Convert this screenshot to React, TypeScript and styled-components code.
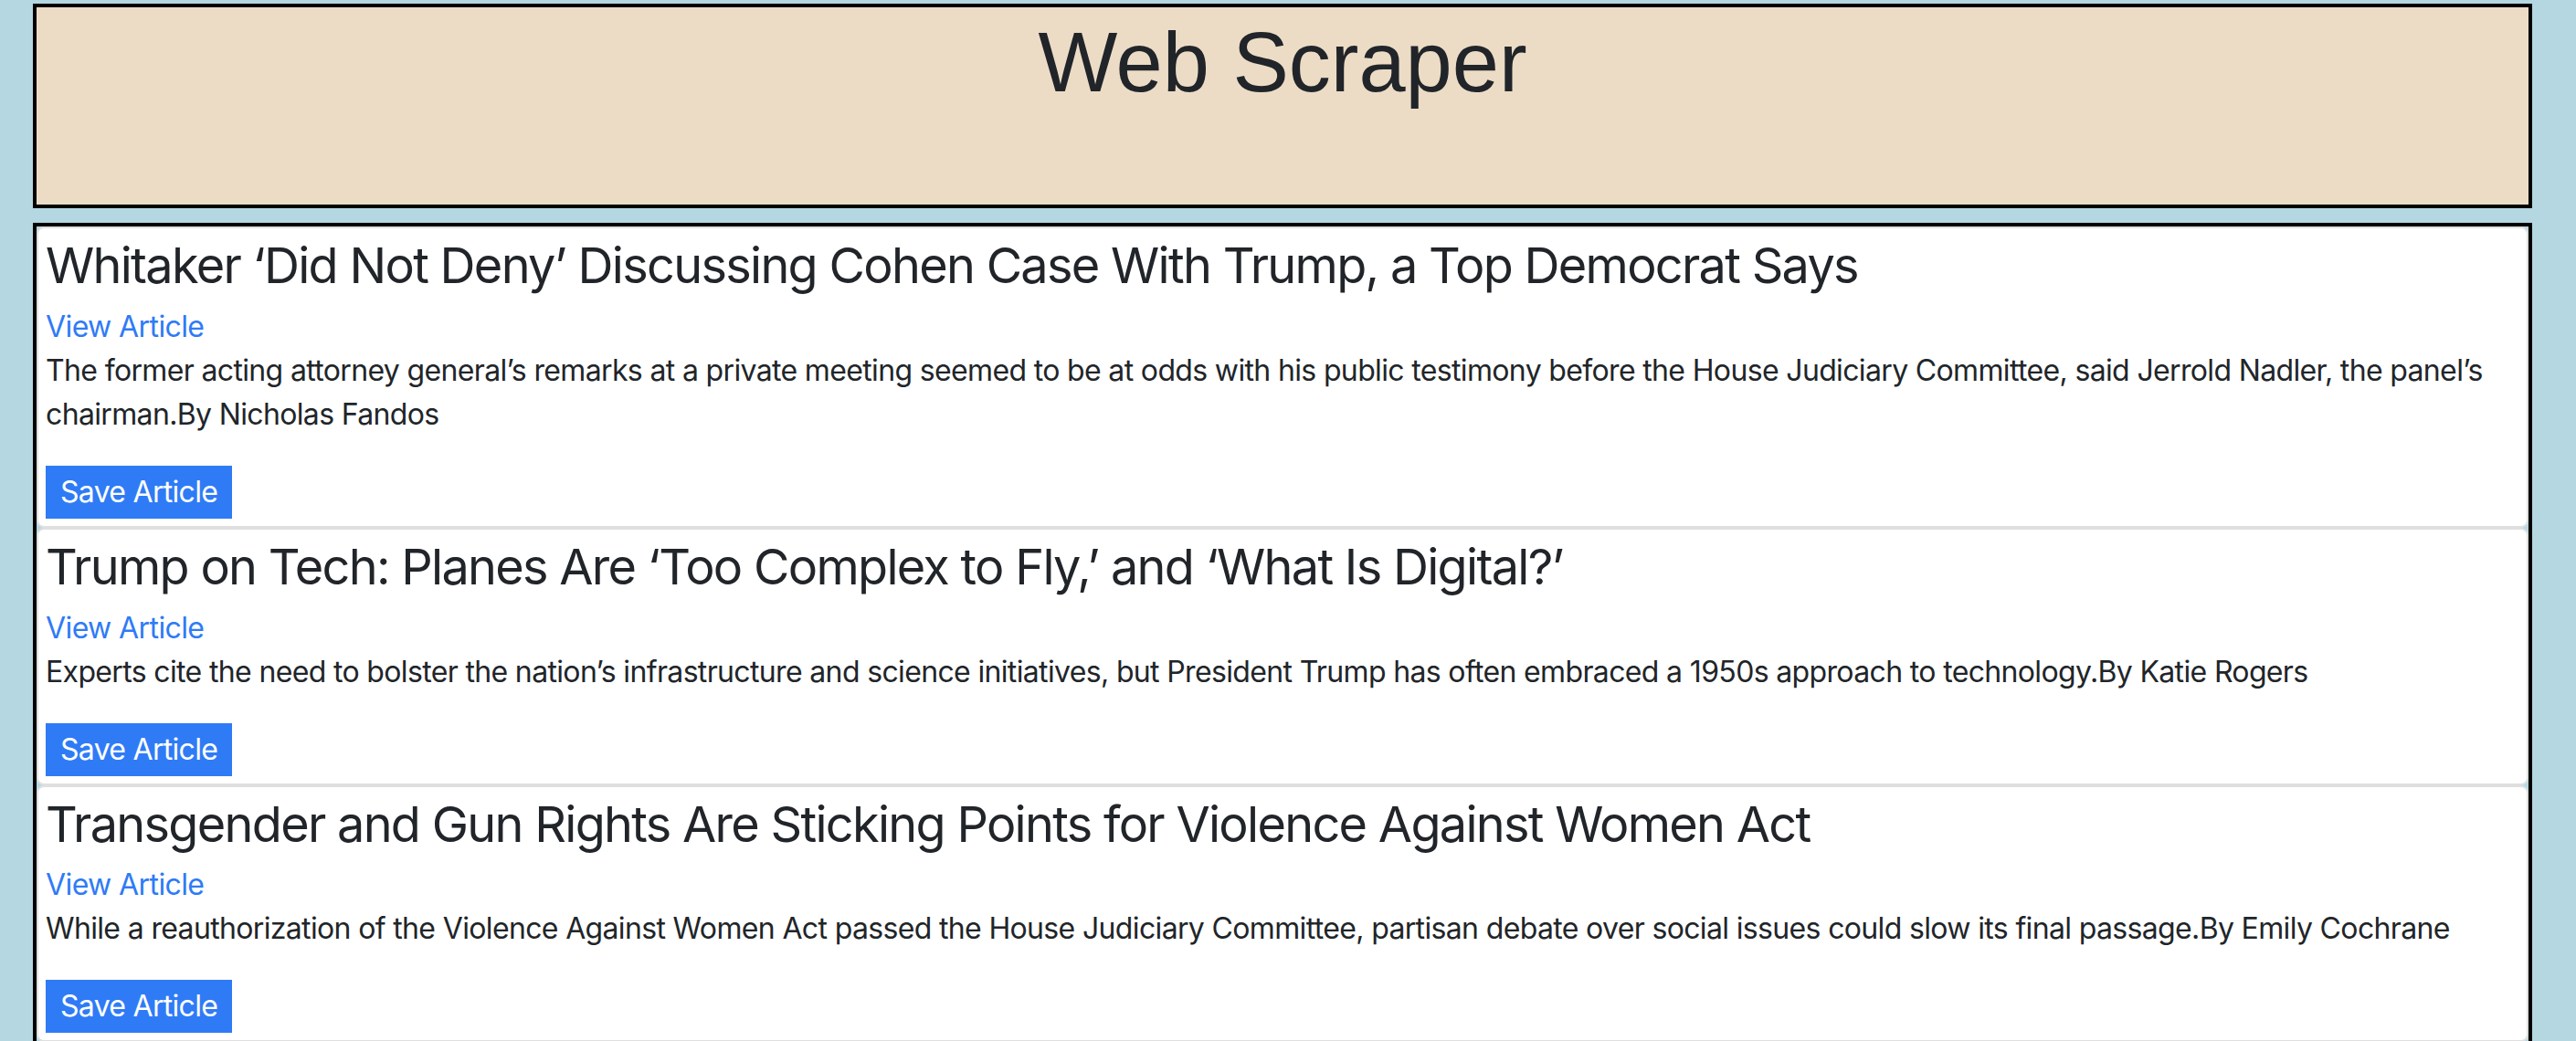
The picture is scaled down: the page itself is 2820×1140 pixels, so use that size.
import React from "react";
import styled, { createGlobalStyle } from "styled-components";

const GlobalStyle = createGlobalStyle`
  html, body {
    margin: 0;
    padding: 0;
    background: #b4d7e2;
  }
  * { box-sizing: border-box; }
`;

const Page = styled.div`
  padding: 4px 48px 0 36px;
  font-family: Inter, "Open Sans", sans-serif;
  color: #212529;
`;

const Header = styled.header`
  height: 224px;
  border: 4px solid #000;
  background: #ecdcc6;
  display: flex;
  justify-content: center;
  align-items: flex-start;
`;

const Title = styled.h1`
  margin: 5px 0 0;
  font-family: "Liberation Sans", Arial, sans-serif;
  font-weight: 400;
  font-size: 92px;
  line-height: 1.2;
  color: #212529;
`;

const List = styled.main`
  margin-top: 16px;
  border: 4px solid #000;
  display: flex;
  flex-direction: column;
`;

const Card = styled.article`
  background: #fff;
  border: 2px solid #dfdfdf;
  border-radius: 8px;
  padding: 9px 8px 8px;
  display: flex;
  flex-direction: column;
  align-items: flex-start;
`;

const Headline = styled.h3`
  margin: 0 0 10px;
  font-size: 54px;
  font-weight: 400;
  line-height: 1.2;
  letter-spacing: -1.7px;
  color: #212529;
`;

const Link = styled.a`
  display: block;
  font-size: 32px;
  line-height: 48px;
  letter-spacing: -0.6px;
  color: #2f7bf6;
  text-decoration: none;
`;

const Summary = styled.p`
  margin: 0 0 32px;
  font-size: 32px;
  line-height: 48px;
  letter-spacing: -0.65px;
`;

const SaveButton = styled.button`
  height: 58px;
  padding: 0 16px;
  border: none;
  border-radius: 0;
  background: #2f7bf6;
  color: #fff;
  font-family: Inter, "Open Sans", sans-serif;
  font-size: 32px;
  line-height: 1;
  letter-spacing: -0.7px;
  cursor: pointer;
`;

const articles = [
  {
    title: "Whitaker ‘Did Not Deny’ Discussing Cohen Case With Trump, a Top Democrat Says",
    summary:
      "The former acting attorney general’s remarks at a private meeting seemed to be at odds with his public testimony before the House Judiciary Committee, said Jerrold Nadler, the panel’s chairman.By Nicholas Fandos",
  },
  {
    title: "Trump on Tech: Planes Are ‘Too Complex to Fly,’ and ‘What Is Digital?’",
    summary:
      "Experts cite the need to bolster the nation’s infrastructure and science initiatives, but President Trump has often embraced a 1950s approach to technology.By Katie Rogers",
  },
  {
    title: "Transgender and Gun Rights Are Sticking Points for Violence Against Women Act",
    summary:
      "While a reauthorization of the Violence Against Women Act passed the House Judiciary Committee, partisan debate over social issues could slow its final passage.By Emily Cochrane",
  },
];

export default function App() {
  return (
    <>
      <GlobalStyle />
      <Page>
        <Header>
          <Title>Web Scraper</Title>
        </Header>
        <List>
          {articles.map((a) => (
            <Card key={a.title}>
              <Headline>{a.title}</Headline>
              <Link href="#">View Article</Link>
              <Summary>{a.summary}</Summary>
              <SaveButton>Save Article</SaveButton>
            </Card>
          ))}
        </List>
      </Page>
    </>
  );
}
